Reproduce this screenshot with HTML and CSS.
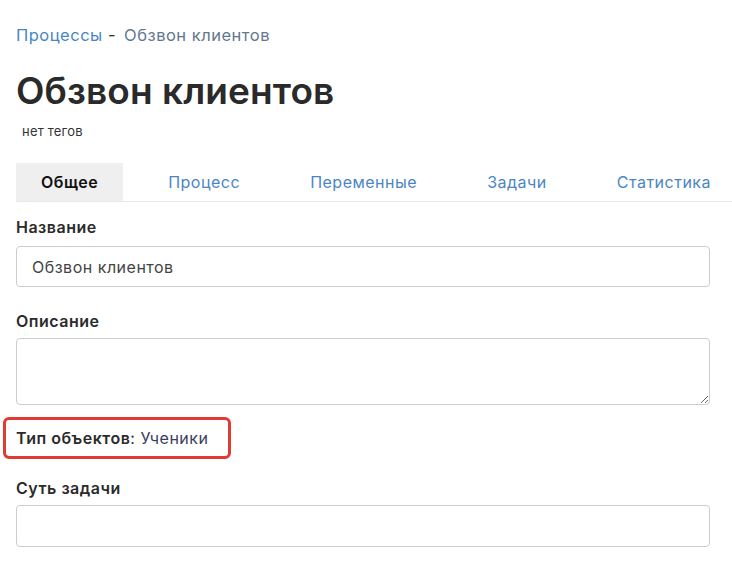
FILE: index.html
```html
<!DOCTYPE html>
<html lang="ru">
<head>
<meta charset="utf-8">
<link rel="stylesheet" href="styles.css">
</head>
<body>
<div class="page">
  <div class="breadcrumb"><a class="crumb-link">Процессы</a><span class="sep"> - </span><span class="crumb-current">Обзвон клиентов</span></div>
  <h1 class="title">Обзвон клиентов</h1>
  <div class="tags">нет тегов</div>
  <div class="tabs">
    <div class="tab active">Общее</div>
    <div class="tab">Процесс</div>
    <div class="tab">Переменные</div>
    <div class="tab">Задачи</div>
    <div class="tab">Статистика</div>
  </div>
  <div class="form">
    <div class="field">
      <label class="label">Название</label>
      <input class="input" type="text" value="Обзвон клиентов">
    </div>
    <div class="field">
      <label class="label">Описание</label>
      <textarea class="textarea"></textarea>
    </div>
    <div class="objtype"><b>Тип объектов</b>: <span class="objval">Ученики</span></div>
    <div class="field">
      <label class="label">Суть задачи</label>
      <input class="input tall" type="text" value="">
    </div>
  </div>
</div>
</body>
</html>
```
FILE: styles.css
```css
html, body { margin: 0; padding: 0; background: #fff; }
body { font-family: Inter, "Noto Sans", sans-serif; color: #2b2b2b; overflow: hidden; letter-spacing: 0.5px; }
.page { padding: 0 0 0 16px; }
.breadcrumb { padding-top: 25px; font-size: 16.5px; line-height: 20px; height: 20px; }
.crumb-link { color: #4a86c5; }
.sep { color: #333; white-space: pre; }
.crumb-current { color: #627890; margin-left: 3px; }
.title { margin: 23px 0 0 0; font-size: 37px; font-weight: 600; line-height: 46px; color: #2a2a2a; letter-spacing: 0.1px; }
.tags { margin: 9px 0 0 6px; font-size: 13px; line-height: 16px; color: #333; letter-spacing: 0.2px; }
.tabs { display: flex; gap: 20px; margin-top: 24px; border-bottom: 1px solid #e8e8e8; height: 38px; }
.tab { padding: 0 25px; font-size: 16px; line-height: 39px; color: #4a86c5; white-space: nowrap; }
.tab.active { background: #efefef; color: #111; font-weight: 600; }
.form { width: 694px; }
.field { display: flex; flex-direction: column; }
.field:first-child { margin-top: 14px; }
.label { font-size: 16px; font-weight: 600; line-height: 22px; color: #2b2b2b; margin-bottom: 8px; }
.input { box-sizing: border-box; height: 41px; border: 1px solid #ccc; border-radius: 4px; padding: 0 15px; font-family: inherit; font-size: 16px; letter-spacing: 0.5px; color: #444; margin: 0; }
.input.tall { height: 42px; }
.textarea { box-sizing: border-box; height: 67px; border: 1px solid #ccc; border-radius: 4px; padding: 8px 15px; font-family: inherit; font-size: 16px; margin: 0; resize: vertical; }
.field + .field { margin-top: 23px; }
.field + .field .label { margin-bottom: 6px; }
.objtype { position: relative; margin-top: 22px; font-size: 16px; line-height: 22px; color: #333; }
.objtype b { font-weight: 600; color: #2b2b2b; }
.objval { color: #3b3d5c; }
.objtype::before { content: ""; position: absolute; left: -13px; top: -10px; width: 222px; height: 36px; border: 3px solid #e03a33; border-radius: 6px; }
.objtype + .field { margin-top: 28px; }
.objtype + .field .label { margin-bottom: 6px; }
```
